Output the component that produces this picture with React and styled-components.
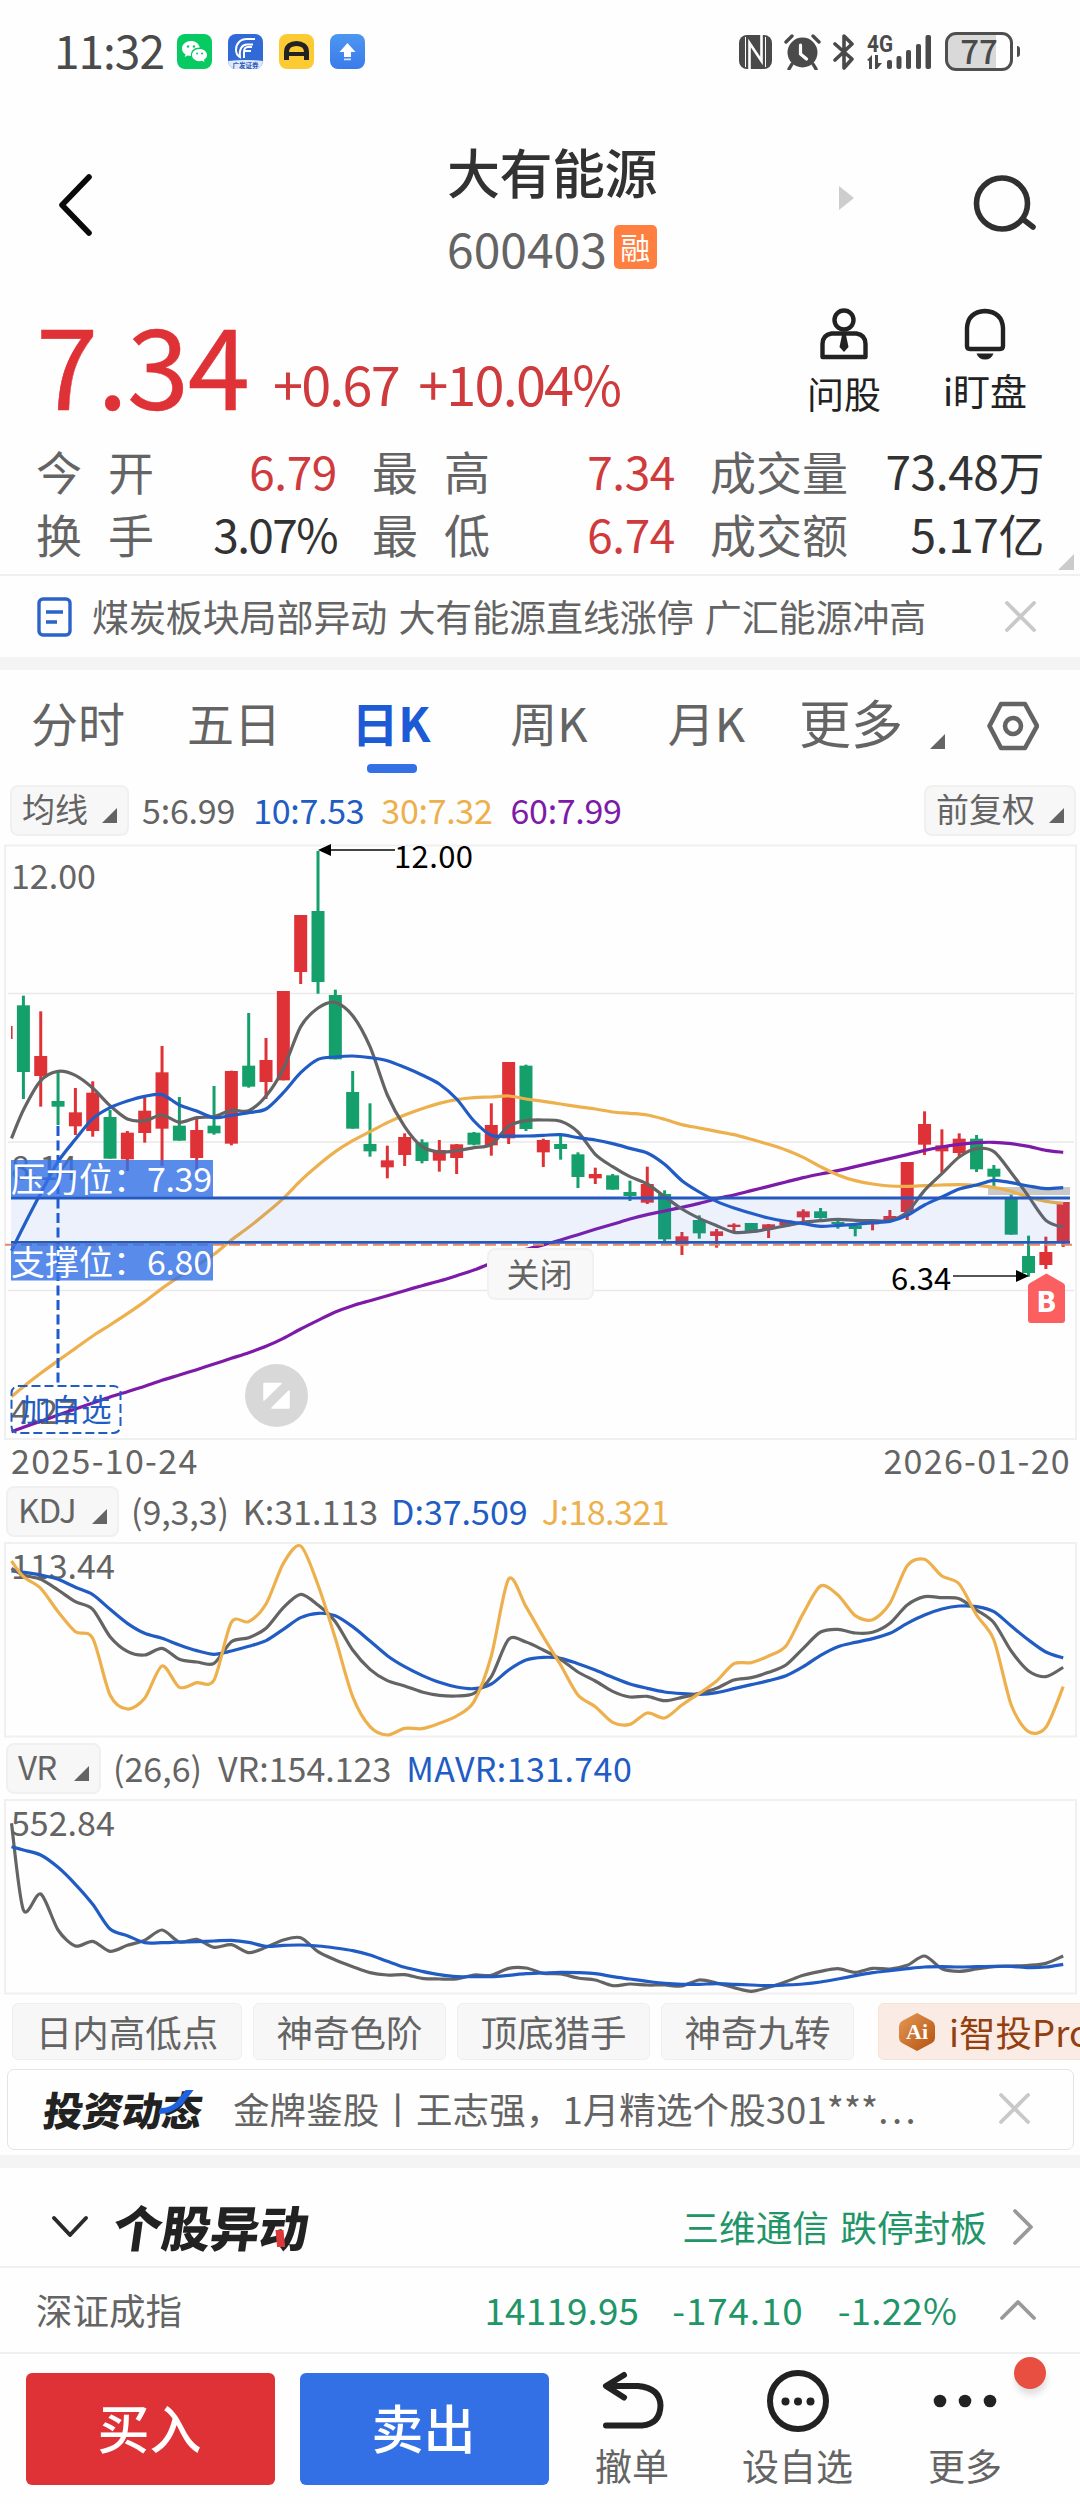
import React from "react";
import styled, { createGlobalStyle } from "styled-components";

const Global = createGlobalStyle`
  * { box-sizing: border-box; }
  body { margin: 0; background: #fefefe; }
  button { font: inherit; border: 0; padding: 0; background: none; }
  svg { display: block; flex: none; }
`;

const C = {
  text: "#323233",
  gray: "#646464",
  red: "#cf3a3d",
  redFill: "#df3237",
  green: "#1f9568",
  greenFill: "#149f6b",
  blue: "#215cc4",
  yellow: "#edb04d",
  purple: "#7d1ba8",
  line: "#f0f0f0",
};

const FONT = '"Noto Sans CJK SC", "Noto Sans", sans-serif';

const Page = styled.main`
  width: 1080px;
  height: 2504px;
  overflow: hidden;
  display: flex;
  flex-direction: column;
  background: #fefefe;
  color: ${C.text};
  font-family: ${FONT};
  white-space: nowrap;
  > * { flex-shrink: 0; }
`;

const Txt = styled.span`
  font-size: ${(p) => p.$s || 34}px;
  line-height: 1.2;
  color: ${(p) => p.$c || "inherit"};
  letter-spacing: ${(p) => p.$ls || 0}px;
  word-spacing: ${(p) => p.$ws || 0}px;
  margin-left: ${(p) => p.$ml || 0}px;
`;

/* ---------- status bar ---------- */
const StatusBar = styled.header`
  height: 104px;
  padding: 0 67px 1px 54px;
  display: flex;
  align-items: center;
  justify-content: space-between;
  color: #4a4a4a;
`;
const StatusGroup = styled.div`
  display: flex;
  align-items: center;
  gap: ${(p) => p.$gap}px;
`;
const Clock = styled.span`
  width: 107px;
  font-size: 46px;
  line-height: 50px;
  letter-spacing: -1px;
  margin-top: -5px;
`;
const AppIcon = styled.span`
  width: 35px;
  height: 35px;
  border-radius: 8px;
  background: ${(p) => p.$bg};
  overflow: hidden;
`;
const Battery = styled.span`
  position: relative;
  width: 68px;
  height: 39px;
  border: 3px solid #4f4f4f;
  border-radius: 11px;
  background: linear-gradient(90deg, #d9d9d9 77%, #fefefe 77%);
  display: flex;
  align-items: center;
  justify-content: center;
  font-size: 33px;
  line-height: 30px;
  padding-bottom: 4px;
  font-weight: 500;
  &::after {
    content: "";
    position: absolute;
    right: -10px;
    top: 11px;
    width: 3.5px;
    height: 11px;
    border-radius: 0 3px 3px 0;
    background: #4f4f4f;
  }
`;

/* ---------- title ---------- */
const TitleBar = styled.section`
  height: 186px;
  display: grid;
  grid-template-columns: 447px 389px 135px 109px;
  align-items: start;
`;
const BackBtn = styled.button`
  margin: 69px 0 0 57px;
  width: 36px;
`;
const TitleCol = styled.div`
  padding-top: 32px;
`;
const StockName = styled.h1`
  margin: 0;
  font-size: 53px;
  line-height: 70px;
  font-weight: 500;
  letter-spacing: -0.5px;
`;
const CodeRow = styled.div`
  margin-top: 8px;
  display: flex;
  align-items: center;
  height: 66px;
  font-size: 48px;
  color: ${C.gray};
`;
const Tag = styled.span`
  margin-left: 7px;
  width: 43px;
  height: 44px;
  border-radius: 5px;
  background: #ff7f41;
  color: #fff;
  font-size: 30px;
  line-height: 42px;
  text-align: center;
`;
const NextMark = styled.div`
  margin: 81px 0 0 2px;
`;
const SearchBtn = styled.button`
  margin: 70px 0 0 1px;
  width: 64px;
`;

/* ---------- quote ---------- */
const Quote = styled.section`
  height: 146px;
  padding: 0 0 0 36px;
  display: flex;
`;
const PriceLine = styled.div`
  width: 761px;
  height: 146px;
  padding-top: 3px;
  display: flex;
  align-items: baseline;
  line-height: 136px;
`;
const Price = styled.strong`
  width: 237px;
  font-size: 112px;
  font-weight: 400;
  -webkit-text-stroke: 0.5px ${C.redFill};
  color: ${C.redFill};
  letter-spacing: -1.2px;
`;
const Delta = styled.span`
  position: relative;
  top: -4px;
  font-size: 54px;
  letter-spacing: -1.8px;
  word-spacing: 9px;
  color: ${C.red};
`;
const Action = styled.button`
  width: ${(p) => p.$w}px;
  padding-top: 18px;
  display: flex;
  flex-direction: column;
  align-items: center;
  color: #222;
  font-size: 37px;
  line-height: 46px;
  gap: ${(p) => p.$gap}px;
`;

const Stats = styled.section`
  position: relative;
  height: 140px;
  padding: 2px 36px 0 36px;
  display: grid;
  grid-template-columns: 301px 303px 334px;
  column-gap: 35px;
  grid-auto-rows: 63px;
  border-bottom: 2px solid ${C.line};
  margin-bottom: 1px;
`;
const Stat = styled.div`
  display: flex;
  justify-content: space-between;
  align-items: center;
  font-size: 46px;
`;
const StatLabel = styled.span`
  color: ${C.gray};
  width: ${(p) => (p.$wide ? "auto" : "118px")};
  display: flex;
  justify-content: space-between;
`;
const StatValue = styled.span`
  color: ${(p) => p.$c || C.text};
  letter-spacing: ${(p) => (p.$tight ? -1.6 : -0.4)}px;
`;
const Corner = styled.i`
  flex: none;
  width: ${(p) => p.$s || 15}px;
  height: ${(p) => p.$s || 15}px;
  background: ${(p) => p.$c || C.gray};
  clip-path: polygon(100% 0, 100% 100%, 0 100%);
`;
const StatsMore = styled(Corner)`
  position: absolute;
  right: 6px;
  bottom: 4px;
`;

const News = styled.section`
  height: 80px;
  padding: 0 44px 1px 37px;
  display: flex;
  align-items: center;
  color: ${C.gray};
`;
const Grow = styled.span`
  flex: 1;
`;
const Band = styled.div`
  height: 13px;
  background: #f4f4f4;
`;

/* ---------- tabs ---------- */
const Tabs = styled.nav`
  height: 110px;
  display: grid;
  grid-template-columns: 156px 156px 158px 158px 148px 154px 150px;
  align-items: start;
  padding-top: 17px;
`;
const Tab = styled.button`
  position: relative;
  height: 88px;
  display: flex;
  justify-content: center;
  padding-left: ${(p) => p.$pl || 0}px;
  font-size: 47px;
  line-height: 70px;
  color: ${(p) => (p.$on ? "#1d5ad6" : C.gray)};
  font-weight: ${(p) => (p.$on ? 700 : 400)};
  &::after {
    content: "";
    display: ${(p) => (p.$on ? "block" : "none")};
    position: absolute;
    left: 55px;
    bottom: 2px;
    width: 50px;
    height: 9px;
    border-radius: 4px;
    background: #3571e6;
  }
`;
const MoreTab = styled(Tab)`
  font-size: 52px;
  justify-content: flex-start;
  padding-left: 23px;
  gap: 27px;
  i { margin-top: 47px; }
`;
const Gear = styled.button`
  padding: 14px 0 0 57px;
`;

/* ---------- indicator rows ---------- */
const IndicatorRow = styled.div`
  height: ${(p) => p.$h}px;
  padding: ${(p) => p.$pad};
  display: flex;
  align-items: flex-start;
`;
const Picker = styled.button`
  height: 51px;
  width: ${(p) => p.$w}px;
  border: 2px solid #f0f0f0;
  border-radius: 8px;
  background: #f7f7f7;
  color: ${C.gray};
  font-size: 33px;
  line-height: 43px;
  letter-spacing: ${(p) => p.$ls || 0}px;
  padding: 0 10px 0 10px;
  display: flex;
  justify-content: space-between;
  i { margin-top: 21px; }
`;
const Figures = styled.div`
  flex: 1;
  display: flex;
  height: 51px;
  align-items: center;
  padding-bottom: 1px;
`;
const ChartBox = styled.div`
  position: relative;
  height: ${(p) => p.$h}px;
`;
const CloseBands = styled.button`
  position: absolute;
  left: 487px;
  top: 408px;
  width: 107px;
  height: 52px;
  border: 2px solid #f1f1f1;
  border-radius: 8px;
  background: #f8f8f8;
  color: ${C.gray};
  font-size: 33px;
  line-height: 42px;
  padding: 0 2px 3px 0;
`;
const Expand = styled.button`
  position: absolute;
  left: 245px;
  top: 524px;
`;
const Dates = styled.div`
  height: 42px;
  padding: 0 9px 2px 11px;
  display: flex;
  justify-content: space-between;
  align-items: center;
  color: ${C.gray};
  font-size: 34px;
  letter-spacing: 1.3px;
  line-height: 34px;
`;

/* ---------- strategy chips ---------- */
const Chips = styled.div`
  height: 57px;
  margin: 9px 0 9px 12px;
  display: flex;
  gap: 11px;
`;
const Chip = styled.button`
  flex: none;
  width: ${(p) => p.$w}px;
  height: 57px;
  border: 1px solid #efefef;
  border-radius: 6px;
  background: #f7f7f7;
  color: ${C.gray};
  font-size: 36.5px;
  line-height: 52px;
`;
const ProChip = styled(Chip)`
  margin-left: 13px;
  padding-left: 19px;
  border-color: #f4e2d5;
  background: #faece5;
  color: #933f10;
  display: flex;
  align-items: center;
  gap: 13px;
`;

const Promo = styled.section`
  height: 81px;
  margin: 0 6px 5px 7px;
  padding: 0 43px 2px 36px;
  border: 1.5px solid #e4e4e4;
  border-radius: 7px;
  display: flex;
  align-items: center;
`;
const Wordmark = styled.strong`
  position: relative;
  width: ${(p) => p.$w}px;
  margin-left: ${(p) => p.$ml || 0}px;
  font-size: ${(p) => p.$s}px;
  line-height: 1.2;
  font-weight: 900;
  letter-spacing: ${(p) => p.$ls}px;
  color: #222;
  transform: skewX(-8deg);
`;
const Accent = styled.svg`
  position: absolute;
  left: ${(p) => p.$x}px;
  top: ${(p) => p.$y}px;
`;

const MoveRow = styled.section`
  height: 100px;
  padding: 19px 46px 0 51px;
  display: flex;
  align-items: center;
  border-bottom: 2px solid ${C.line};
`;
const RowMark = styled.span`
  margin-left: ${(p) => p.$ml}px;
`;
const IndexRow = styled.section`
  height: 86px;
  padding: 0 43px 1px 36px;
  display: flex;
  align-items: center;
  border-bottom: 2px solid ${C.line};
`;

/* ---------- bottom bar ---------- */
const BottomBar = styled.footer`
  height: 150px;
  padding-left: 26px;
  display: flex;
  align-items: flex-start;
`;
const Trade = styled.button`
  width: 249px;
  height: 112px;
  margin: 19px 25px 0 0;
  padding: 0 2px 4px 0;
  border-radius: 6px;
  background: ${(p) => p.$bg};
  color: #fff;
  font-size: 52px;
  line-height: 102px;
  font-weight: 500;
`;
const Tool = styled.button`
  position: relative;
  width: ${(p) => p.$w}px;
  padding-top: 16px;
  display: flex;
  flex-direction: column;
  align-items: center;
  color: ${C.gray};
  font-size: 37px;
  line-height: 46px;
  gap: 10px;
`;
const Dot = styled.i`
  position: absolute;
  left: 109px;
  top: 3px;
  width: 32px;
  height: 32px;
  border-radius: 50%;
  background: #e94f41;
  box-shadow: 1px 6px 6px rgba(0, 0, 0, 0.12);
`;

/* ---------- chart data: one entry per trading day ---------- */
// [up, high, low, bodyTop, bodyBottom] in thirds of a pixel below the panel top
const CANDLES = [
  [0, 467, 777, 496, 696], [1, 514, 800, 648, 708], [0, 696, 855, 783, 800], [1, 744, 885, 817, 859],
  [1, 724, 890, 758, 873], [0, 810, 956, 831, 956], [1, 873, 993, 878, 958], [1, 770, 908, 812, 879],
  [1, 618, 978, 697, 866], [0, 771, 902, 857, 902], [1, 835, 990, 870, 954], [0, 738, 884, 857, 880],
  [1, 692, 916, 693, 911], [0, 519, 743, 677, 740], [1, 594, 777, 660, 726], [1, 453, 721, 453, 721],
  [1, 225, 432, 225, 396], [0, 33, 461, 213, 426], [0, 449, 658, 465, 658], [0, 693, 866, 756, 866],
  [0, 790, 950, 912, 934], [1, 917, 1015, 961, 982], [1, 880, 978, 891, 945], [0, 898, 970, 907, 963],
  [1, 900, 995, 930, 962], [1, 912, 1002, 913, 954], [0, 876, 916, 878, 914], [1, 790, 947, 855, 916],
  [1, 666, 912, 666, 895], [0, 674, 873, 677, 867], [1, 896, 981, 900, 937], [0, 888, 959, 912, 927],
  [0, 937, 1044, 943, 1011], [1, 983, 1032, 1002, 1015], [0, 1002, 1049, 1006, 1049], [0, 1022, 1083, 1056, 1068],
  [1, 980, 1092, 1032, 1088], [0, 1051, 1203, 1062, 1198], [1, 1176, 1245, 1189, 1216], [0, 1126, 1196, 1140, 1180],
  [1, 1167, 1223, 1174, 1188], [1, 1150, 1174, 1154, 1161], [0, 1149, 1178, 1149, 1177], [1, 1152, 1194, 1153, 1167],
  [1, 1142, 1160, 1142, 1156], [1, 1108, 1143, 1114, 1132], [0, 1104, 1136, 1114, 1134], [0, 1143, 1166, 1146, 1152],
  [0, 1150, 1189, 1156, 1167], [1, 1148, 1171, 1148, 1153], [1, 1110, 1142, 1128, 1140], [1, 966, 1140, 966, 1116],
  [1, 814, 945, 852, 914], [1, 868, 998, 916, 934], [1, 880, 950, 896, 939], [0, 885, 996, 896, 988],
  [0, 975, 1040, 986, 1010], [0, 1064, 1184, 1072, 1184], [0, 1187, 1310, 1248, 1299], [1, 1190, 1287, 1236, 1275],
  [1, 1086, 1221, 1086, 1207],
];
// the first value of every series is where the line enters the panel
const MA5 = [895, 810, 722, 694, 706, 744, 797, 837, 842, 825, 847, 833, 830, 811, 812, 768, 686, 560, 504, 487, 527, 620, 765, 860, 920, 936, 932, 923, 914, 858, 842, 840, 844, 876, 943, 980, 1010, 1032, 1070, 1107, 1135, 1157, 1177, 1175, 1167, 1157, 1147, 1142, 1138, 1141, 1142, 1142, 1116, 1051, 1001, 951, 926, 935, 998, 1069, 1141, 1162];
const MA10 = [1232, 1160, 1060, 965, 898, 836, 803, 783, 769, 764, 795, 813, 833, 826, 818, 807, 758, 698, 658, 651, 648, 653, 662, 682, 705, 732, 777, 843, 886, 888, 888, 886, 884, 893, 900, 911, 925, 939, 973, 1022, 1056, 1084, 1104, 1120, 1134, 1144, 1151, 1159, 1156, 1153, 1148, 1144, 1126, 1095, 1071, 1047, 1035, 1021, 1028, 1038, 1046, 1043];
const MA30 = [1670, 1640, 1600, 1562, 1525, 1488, 1455, 1421, 1385, 1345, 1310, 1277, 1243, 1200, 1162, 1120, 1075, 1022, 976, 935, 902, 875, 848, 825, 806, 790, 779, 773, 771, 768, 777, 784, 792, 800, 807, 816, 820, 825, 838, 854, 864, 874, 884, 898, 913, 930, 952, 980, 1005, 1022, 1032, 1038, 1039, 1037, 1035, 1034, 1036, 1042, 1054, 1072, 1084, 1090];
const MA60 = [1775, 1762, 1744, 1725, 1707, 1689, 1671, 1655, 1639, 1621, 1605, 1589, 1572, 1555, 1538, 1519, 1495, 1467, 1441, 1416, 1397, 1382, 1367, 1352, 1337, 1323, 1307, 1290, 1269, 1247, 1228, 1215, 1200, 1184, 1168, 1153, 1137, 1124, 1113, 1102, 1090, 1076, 1065, 1052, 1039, 1026, 1013, 1002, 992, 980, 968, 956, 944, 931, 921, 913, 908, 907, 911, 919, 931, 937];
const KDJ_J = [243, 290, 325, 395, 455, 475, 645, 687, 655, 558, 622, 608, 600, 427, 425, 372, 250, 198, 315, 475, 650, 740, 765, 745, 746, 730, 708, 665, 528, 297, 380, 470, 555, 645, 680, 727, 733, 699, 714, 675, 640, 603, 551, 548, 528, 498, 400, 318, 345, 407, 419, 370, 257, 238, 288, 312, 405, 480, 675, 755, 742, 620];
const KDJ_K = [265, 285, 298, 330, 365, 388, 470, 514, 525, 505, 538, 546, 550, 485, 473, 445, 383, 343, 375, 425, 510, 568, 602, 618, 636, 646, 648, 640, 590, 478, 486, 510, 538, 576, 603, 634, 651, 649, 662, 652, 640, 625, 600, 593, 577, 555, 505, 456, 448, 459, 457, 430, 375, 350, 353, 356, 390, 428, 513, 573, 590, 562];
const KDJ_D = [273, 277, 285, 298, 322, 344, 388, 430, 460, 475, 495, 512, 523, 513, 499, 482, 448, 413, 400, 407, 440, 483, 527, 560, 586, 607, 621, 626, 612, 570, 540, 532, 535, 551, 570, 592, 612, 625, 636, 641, 643, 638, 626, 614, 602, 587, 560, 526, 500, 487, 476, 460, 430, 405, 387, 378, 380, 395, 438, 480, 516, 534];
const VR = [250, 510, 462, 570, 618, 604, 634, 616, 601, 570, 606, 598, 622, 614, 638, 622, 600, 593, 635, 660, 680, 698, 705, 704, 715, 717, 717, 705, 706, 685, 684, 700, 702, 714, 720, 737, 732, 735, 735, 738, 720, 729, 743, 754, 742, 725, 706, 694, 686, 697, 685, 687, 676, 648, 686, 694, 687, 680, 678, 676, 670, 648];
const MAVR = [320, 330, 345, 382, 433, 493, 567, 587, 608, 608, 606, 605, 603, 601, 607, 619, 616, 615, 618, 624, 632, 645, 664, 682, 694, 704, 710, 710, 710, 706, 701, 699, 697, 698, 701, 710, 717, 724, 730, 733, 733, 731, 733, 735, 737, 735, 732, 726, 717, 707, 698, 692, 686, 681, 680, 681, 680, 679, 679, 683, 681, 673];

const dayX = (i) => 23.4 + 17.33 * i;

function smooth(series, top) {
  const pts = series.map((v, i) => [i === 0 ? 11.5 : dayX(i - 1), top + v / 3]);
  let d = `M${pts[0][0]} ${pts[0][1]}`;
  for (let i = 0; i < pts.length - 1; i++) {
    const a = pts[i];
    const b = pts[i + 1];
    const pa = pts[i - 1] || a;
    const nb = pts[i + 2] || b;
    const k = 1 / 7;
    d += `C${a[0] + (b[0] - pa[0]) * k} ${a[1] + (b[1] - pa[1]) * k} ${b[0] - (nb[0] - a[0]) * k} ${b[1] - (nb[1] - a[1]) * k} ${b[0]} ${b[1]}`;
  }
  return d;
}

const Line = ({ data, top, color }) => (
  <path d={smooth(data, top)} fill="none" stroke={color} strokeWidth="3.2" strokeLinejoin="round" />
);

const Label = styled.text`
  font-family: ${FONT};
  font-size: ${(p) => p.$s || 34}px;
  fill: ${(p) => p.$c || C.gray};
`;

function PriceChart() {
  return (
    <svg width="1080" height="600" viewBox="0 840 1080 600">
      <g stroke="#f0f0f0" strokeWidth="2" fill="none">
        <rect x="5" y="845.500" width="1071" height="593.500" />
        <path d="M8 993.500H1074M8 1142H1074M8 1290.500H1074" stroke="#e9e9e9" strokeWidth="1.4" />
      </g>
      <rect x="988" y="1187" width="82" height="8" fill="#c9c9c9" />
      <rect x="11" y="1026" width="1.6" height="13" fill={C.red} />
      {CANDLES.map(([up, hi, lo, t, b], i) => {
        const x = dayX(i);
        return (
          <g key={i} fill={up ? C.redFill : C.greenFill}>
            <rect x={x - 1.5} y={840 + hi / 3} width="3" height={(lo - hi) / 3} />
            <rect x={x - 6.5} y={840 + t / 3} width="13" height={(b - t) / 3} />
          </g>
        );
      })}
      <Label x="11" y="889">12.00</Label>
      <Label x="11" y="1180">8.14</Label>
      <Label x="11" y="1424">4.27</Label>
      <Line data={MA60} top={840} color={C.purple} />
      <Line data={MA30} top={840} color={C.yellow} />
      <Line data={MA5} top={840} color={C.gray} />
      <Line data={MA10} top={840} color={C.blue} />
      <path d="M58 1126V1386" stroke="#1d5ad0" strokeWidth="3" strokeDasharray="10 4.500" />
      <rect x="11" y="1198" width="1059" height="45" fill="#3571e6" fillOpacity=".09" />
      <path d="M5 1244.800H1076" stroke="#e8895d" strokeWidth="2" strokeDasharray="11 5" />
      <path d="M11 1198H1070M11 1242.300H1070" stroke="#2459bd" strokeWidth="2.800" />
      <rect x="11" y="1160" width="202" height="37" fill="#3571e6" fillOpacity=".82" />
      <rect x="11" y="1244" width="202" height="36.500" fill="#3571e6" fillOpacity=".82" />
      <Label x="11" y="1192" $c="#fff">压力位：</Label>
      <Label x="147" y="1192" $c="#fff" textLength="65">7.39</Label>
      <Label x="11" y="1275" $c="#fff">支撑位：</Label>
      <Label x="147" y="1275" $c="#fff" textLength="65">6.80</Label>
      <rect x="11.500" y="1386" width="109" height="47" rx="7" fill="none" stroke={C.blue} strokeWidth="2" strokeDasharray="9 4" />
      <Label x="20" y="1421" $s="30.5" $c={C.blue}>加自选</Label>
      <path d="M330 850H395" stroke="#444" strokeWidth="1.8" />
      <path d="M318 850l13-6v12z" fill="#000" />
      <Label x="394" y="868" $s="31" $c="#000" textLength="79">12.00</Label>
      <path d="M953 1276H1018" stroke="#555" strokeWidth="1.8" />
      <path d="M1029 1276l-13-6v12z" fill="#000" />
      <Label x="891" y="1290" $s="31" $c="#000">6.34</Label>
      <path d="M1046.500 1273.500l16.500 9.500q2 1 2 3v34q0 3-3 3h-31q-3 0-3-3v-34q0-2 2-3z" fill="#fb5f5f" />
      <Label x="1036.500" y="1312" $s="28" $c="#fff" fontWeight="900">B</Label>
    </svg>
  );
}

const Panel = ({ top, label, labelY, children }) => (
  <svg width="1080" height="200" viewBox={`0 ${top} 1080 200`}>
    <rect x="5" y={top + 3} width="1071" height="193.500" fill="none" stroke="#f0f0f0" strokeWidth="2" />
    <Label x="11" y={labelY}>{label}</Label>
    {children}
  </svg>
);

/* ---------- icons ---------- */
const Cross = () => (
  <svg width="31" height="31" viewBox="0 0 31 31" stroke="#c9c9c9" strokeWidth="3.800" strokeLinecap="round">
    <path d="M2 2l27 27M29 2L2 29" />
  </svg>
);

const stat = (label, value, color) => (
  <Stat key={label}>
    <StatLabel $wide={label.length === 3}>{label.length === 3 ? label : [...label].map((ch) => <span key={ch}>{ch}</span>)}</StatLabel>
    <StatValue $c={color} $tight={value.endsWith("%")}>{value}</StatValue>
  </Stat>
);

export default function App() {
  return (
    <Page>
      <Global />
      <StatusBar>
        <StatusGroup $gap={16}>
          <Clock>11:32</Clock>
          <AppIcon $bg="#07ca63">
            <svg width="35" height="35" viewBox="0 0 35 35" fill="#fff">
              <path d="M14 7c-5 0-9 3.300-9 7.500 0 2.500 1.300 4.500 3.500 6L7.700 23l3-1.500c1.100.3 2.200.4 3.300.4C13.500 17 17 13.500 22.800 13.500 22 9.700 18.500 7 14 7z" />
              <path d="M22.500 15c-4.200 0-7.500 2.700-7.500 6.100s3.300 6.100 7.500 6.100c.9 0 1.800-.1 2.500-.4l2.500 1.300-.6-2.200c1.900-1.200 3.100-2.900 3.100-4.800 0-3.400-3.300-6.100-7.500-6.100z" />
              <g fill="#07ca63"><circle cx="11" cy="12.500" r="1.200" /><circle cx="17" cy="12.500" r="1.200" /><circle cx="20" cy="19.500" r="1" /><circle cx="25" cy="19.500" r="1" /></g>
            </svg>
          </AppIcon>
          <AppIcon $bg="#3169d6">
            <svg width="35" height="35" viewBox="0 0 35 35">
              <path d="M27 5H19C12 5 8 10 8 15.500c0 3 1 6 4 7.500-1-8 2-12.500 7-12.500h6M24 13h-4c-3 0-4 2-4 5v6M23 17h-6" fill="none" stroke="#fff" strokeWidth="2" />
              <path d="M0 27q17-2 35 0v8H0z" fill="#dfe9fb" />
              <text x="4.500" y="34" fontSize="6.500" fontWeight="700" fontFamily="Noto Sans CJK SC" fill="#2a59b8">广发证券</text>
            </svg>
          </AppIcon>
          <AppIcon $bg="#fccb33">
            <svg width="35" height="35" viewBox="0 0 35 35">
              <path d="M7.500 26v-8C7.500 12 12 9.500 17.500 9.500S27.500 12 27.500 18v8" fill="none" stroke="#222" strokeWidth="5" />
              <path d="M9 18h17v4H9z" fill="#222" />
            </svg>
          </AppIcon>
          <AppIcon $bg="linear-gradient(#4d96f1,#3a7bea)">
            <svg width="35" height="35" viewBox="0 0 35 35" fill="#fff">
              <path d="M17.500 9l8 9h-4.500v5h-7v-5H9.500z" /><path d="M14 24.500h7v1.700h-7z" opacity=".8" />
            </svg>
          </AppIcon>
        </StatusGroup>
        <StatusGroup $gap={12}>
          <svg width="33" height="34" viewBox="0 0 33 34">
            <rect x="0" y="0" width="33" height="34" rx="8" fill="#4a4a4a" />
            <path d="M10.500 34V8l12 18V0" fill="none" stroke="#fefefe" strokeWidth="2.600" />
            <path d="M6.500 2v30M26.500 2v30" fill="none" stroke="#fefefe" strokeWidth="1" />
          </svg>
          <svg width="37" height="36" viewBox="0 0 37 36">
            <circle cx="18.500" cy="18.500" r="15" fill="#4a4a4a" />
            <path d="M2 8l6-6M35 8l-6-6M8 30l-3 5M29 30l3 5" stroke="#4a4a4a" strokeWidth="3.400" strokeLinecap="round" />
            <path d="M16.500 11v9l6 5" fill="none" stroke="#fefefe" strokeWidth="3.200" strokeLinecap="round" />
          </svg>
          <svg width="22" height="36" viewBox="0 0 22 36" fill="none" stroke="#4a4a4a" strokeWidth="3.600" strokeLinejoin="round" strokeLinecap="round">
            <path d="M2 10l17 15-8 9V2l8 8L2 26" />
          </svg>
          <svg width="66" height="38" viewBox="0 0 66 38" fill="#4a4a4a">
            <text x="0" y="19" fontSize="23" fontWeight="700" fontFamily="Roboto" textLength="26" lengthAdjust="spacingAndGlyphs">4G</text>
            <path d="M0 27l5-5v14H2V28zM8 22h3v8l4 0-5 6H8z" />
            <rect x="20" y="27" width="5" height="9" rx="2" /><rect x="29.500" y="23" width="5" height="13" rx="2" /><rect x="39" y="17" width="5" height="19" rx="2" /><rect x="49" y="11" width="5" height="25" rx="2" /><rect x="58.500" y="2" width="5.500" height="34" rx="2" />
          </svg>
          <Battery>77</Battery>
        </StatusGroup>
      </StatusBar>

      <TitleBar>
        <BackBtn>
          <svg width="36" height="64" viewBox="0 0 36 64" fill="none" stroke="#0a0a0a" strokeWidth="5.600" strokeLinecap="round" strokeLinejoin="round"><path d="M32 4L5 32l27 28" /></svg>
        </BackBtn>
        <TitleCol>
          <StockName>大有能源</StockName>
          <CodeRow>600403<Tag>融</Tag></CodeRow>
        </TitleCol>
        <NextMark>
          <svg width="17" height="26" viewBox="0 0 17 26" fill="#cdcdcd"><path d="M1 1l15 12L1 25z" /></svg>
        </NextMark>
        <SearchBtn>
          <svg width="66" height="60" viewBox="0 0 66 60" fill="none" stroke="#303030" strokeWidth="5.600" strokeLinecap="round"><circle cx="30" cy="29.500" r="25.500" /><path d="M52 46l9 7" /></svg>
        </SearchBtn>
      </TitleBar>

      <Quote>
        <PriceLine>
          <Price>7.34</Price>
          <Delta>+0.67 +10.04%</Delta>
        </PriceLine>
        <Action $w={94} $gap={10}>
          <svg width="50" height="52" viewBox="0 0 50 52" fill="none" stroke="#222" strokeWidth="4.400">
            <circle cx="25" cy="12" r="9.500" />
            <path d="M3.500 49V36q0-9 9-10.500h25q9 1.500 9 10.500v13z" strokeLinejoin="round" />
            <path d="M23 27h4l2.500 12-4.500 5-4.500-5z" fill="#222" stroke="none" />
          </svg>
          问股
        </Action>
        <Action $w={188} $gap={7}>
          <svg width="42" height="52" viewBox="0 0 42 52" fill="none" stroke="#222" strokeWidth="4.400">
            <path d="M3 38V20Q4 4 21 3q17 1 18 17v18q0 3-3 3H6q-3 0-3-3z" />
            <path d="M12.500 45.500h17q-2 6-8.500 6t-8.500-6z" fill="#222" stroke="none" />
          </svg>
          i盯盘
        </Action>
      </Quote>

      <Stats>
        {stat("今开", "6.79", C.red)}
        {stat("最高", "7.34", C.red)}
        {stat("成交量", "73.48万")}
        {stat("换手", "3.07%")}
        {stat("最低", "6.74", C.red)}
        {stat("成交额", "5.17亿")}
        <StatsMore $s={16} $c="#cbcbcb" />
      </Stats>

      <News>
        <svg width="35" height="40" viewBox="0 0 35 40" fill="none" stroke="#2b63c9" strokeWidth="3.400">
          <rect x="2" y="2" width="31" height="36" rx="4" /><path d="M9 15h17M9 25h11" />
        </svg>
        <Txt $s={37} $ml={20} $ls={-0.1} $ws={3}>煤炭板块局部异动 大有能源直线涨停 广汇能源冲高</Txt>
        <Grow />
        <Cross />
      </News>
      <Band />

      <Tabs>
        <Tab>分时</Tab>
        <Tab>五日</Tab>
        <Tab $on>日K</Tab>
        <Tab>周K</Tab>
        <Tab $pl={9}>月K</Tab>
        <MoreTab>更多<Corner /></MoreTab>
        <Gear>
          <svg width="52" height="50" viewBox="0 0 52 50" fill="none" stroke="#646464" strokeWidth="4.600" strokeLinejoin="round">
            <path d="M14 3h24l12 22-12 22H14L2.500 25z" /><circle cx="26" cy="25" r="8" />
          </svg>
        </Gear>
      </Tabs>

      <IndicatorRow $h={60} $pad="5px 4px 0 10px">
        <Picker $w={119}>均线<Corner /></Picker>
        <Figures>
          <Txt $c={C.gray} $ml={13} $ls={-0.2}>5:6.99</Txt>
          <Txt $c={C.blue} $ml={18} $ls={-0.3}>10:7.53</Txt>
          <Txt $c={C.yellow} $ml={17} $ls={-0.3}>30:7.32</Txt>
          <Txt $c={C.purple} $ml={18} $ls={-0.3}>60:7.99</Txt>
        </Figures>
        <Picker $w={152}>前复权<Corner /></Picker>
      </IndicatorRow>

      <ChartBox $h={600}>
        <PriceChart />
        <CloseBands>关闭</CloseBands>
        <Expand>
          <svg width="63" height="63" viewBox="0 0 63 63"><circle cx="31.500" cy="31.500" r="31.500" fill="#d8d8d8" /><path d="M19 19.500h17L19 36zM44 27v17H27z" fill="#fff" stroke="#fff" strokeWidth="1.500" strokeLinejoin="round" /></svg>
        </Expand>
      </ChartBox>
      <Dates><span>2025-10-24</span><span>2026-01-20</span></Dates>

      <IndicatorRow $h={58} $pad="4px 0 0 6px">
        <Picker $w={113} $ls={-0.8}>KDJ<Corner /></Picker>
        <Figures>
          <Txt $c={C.gray} $ml={12} $ls={-0.1}>(9,3,3)</Txt>
          <Txt $c={C.gray} $ml={14}>K:31.113</Txt>
          <Txt $c={C.blue} $ml={13}>D:37.509</Txt>
          <Txt $c={C.yellow} $ml={14} $ls={-0.5}>J:18.321</Txt>
        </Figures>
      </IndicatorRow>
      <ChartBox $h={200}>
        <Panel top={1540} label="113.44" labelY={1579}>
          <Line data={KDJ_D} top={1480} color={C.blue} />
          <Line data={KDJ_K} top={1480} color={C.gray} />
          <Line data={KDJ_J} top={1480} color={C.yellow} />
        </Panel>
      </ChartBox>

      <IndicatorRow $h={57} $pad="3px 0 0 6px">
        <Picker $w={95} $ls={-0.8}>VR<Corner /></Picker>
        <Figures>
          <Txt $c={C.gray} $ml={12}>(26,6)</Txt>
          <Txt $c={C.gray} $ml={16}>VR:154.123</Txt>
          <Txt $c={C.blue} $ml={15} $ls={0.4}>MAVR:131.740</Txt>
        </Figures>
      </IndicatorRow>
      <ChartBox $h={197}>
        <Panel top={1797} label="552.84" labelY={1836}>
          <Line data={VR} top={1740} color={C.gray} />
          <Line data={MAVR} top={1740} color={C.blue} />
        </Panel>
      </ChartBox>

      <Chips>
        <Chip $w={230}>日内高低点</Chip>
        <Chip $w={193}>神奇色阶</Chip>
        <Chip $w={193}>顶底猎手</Chip>
        <Chip $w={193}>神奇九转</Chip>
        <ProChip $w={240}>
          <svg width="38" height="40" viewBox="0 0 38 40">
            <defs><linearGradient id="ai" x1="0" y1="0" x2="1" y2="1"><stop offset="0" stopColor="#e59a55" /><stop offset="1" stopColor="#b4500f" /></linearGradient></defs>
            <path d="M19 1l15 8q3 2 3 5v12q0 3-3 5l-15 8-15-8q-3-2-3-5V14q0-3 3-5z" fill="url(#ai)" />
            <text x="19" y="27" fontSize="22" fontWeight="700" textAnchor="middle" fontFamily="Liberation Serif" fill="#fff">Ai</text>
          </svg>
          i智投Pro
        </ProChip>
      </Chips>

      <Promo>
        <Wordmark $w={189} $s={40} $ls={-0.5}>投资动态
          <Accent $x={115} $y={4} width="34" height="30" viewBox="0 0 34 30"><path d="M1 19q10 0 15-6l8-12h8l-9 14Q14 25 0 25z" fill="#1f62e0" /></Accent>
        </Wordmark>
        <Txt $s={36.5} $c={C.gray} $ls={0.1}>金牌鉴股丨王志强，1月精选个股301***</Txt>
        <Txt $s={36.5} $c={C.gray} $ls={3.5}>...</Txt>
        <Grow />
        <Cross />
      </Promo>
      <Band />

      <MoveRow>
        <svg width="38" height="24" viewBox="0 0 38 24" fill="none" stroke="#2a2a2a" strokeWidth="4" strokeLinecap="round" strokeLinejoin="round"><path d="M3 3l16 17L35 3" /></svg>
        <Wordmark $w={200} $s={49} $ls={-0.3} $ml={25}>个股异动
          <Accent $x={162} $y={33} width="12" height="18" viewBox="0 0 12 18"><path d="M0 0h8l4 17H4z" fill="#dc3a3a" /></Accent>
        </Wordmark>
        <Grow />
        <Txt $s={36.7} $c={C.green} $ws={3}>三维通信 跌停封板</Txt>
        <RowMark $ml={25}>
          <svg width="22" height="38" viewBox="0 0 22 38" fill="none" stroke="#999" strokeWidth="3.800" strokeLinecap="round" strokeLinejoin="round"><path d="M3 3l16 16L3 35" /></svg>
        </RowMark>
      </MoveRow>
      <IndexRow>
        <Txt $s={36.5} $c={C.gray}>深证成指</Txt>
        <Grow />
        <Txt $s={36.8} $c={C.green} $ls={0.2}>14119.95</Txt>
        <Txt $s={36.8} $c={C.green} $ml={33} $ls={0.9}>-174.10</Txt>
        <Txt $s={36.8} $c={C.green} $ml={34} $ls={0.2}>-1.22%</Txt>
        <RowMark $ml={42}>
          <svg width="38" height="22" viewBox="0 0 38 22" fill="none" stroke="#999" strokeWidth="3.800" strokeLinecap="round" strokeLinejoin="round"><path d="M3 19L19 3l16 16" /></svg>
        </RowMark>
      </IndexRow>

      <BottomBar>
        <Trade $bg="#df3236">买入</Trade>
        <Trade $bg="#3370e6">卖出</Trade>
        <Tool $w={116}>
          <svg width="64" height="62" viewBox="0 0 64 62" fill="none" stroke="#222" strokeWidth="6" strokeLinecap="round" strokeLinejoin="round">
            <path d="M24 5L6 16 24 27.500M7 16H38Q60 18 60.500 35.500 60 54 42 55.500H6" />
          </svg>
          撤单
        </Tool>
        <Tool $w={215}>
          <svg width="64" height="62" viewBox="0 0 64 62" fill="#222"><circle cx="32" cy="31" r="28" fill="none" stroke="#222" strokeWidth="6" /><circle cx="19.500" cy="31.500" r="4" /><circle cx="32" cy="31.500" r="4" /><circle cx="44.500" cy="31.500" r="4" /></svg>
          设自选
        </Tool>
        <Tool $w={120}>
          <svg width="64" height="62" viewBox="0 0 64 62" fill="#222"><circle cx="7" cy="31" r="6.300" /><circle cx="32" cy="31" r="6.300" /><circle cx="57" cy="31" r="6.300" /></svg>
          更多
          <Dot />
        </Tool>
      </BottomBar>
    </Page>
  );
}
